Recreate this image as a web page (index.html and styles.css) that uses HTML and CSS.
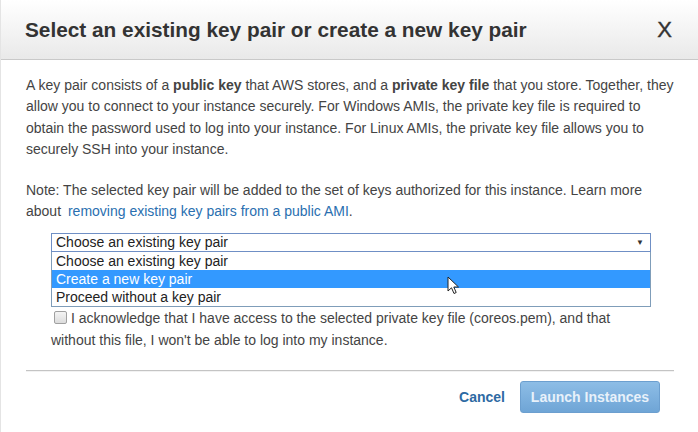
FILE: index.html
```html
<!DOCTYPE html>
<html>
<head>
<meta charset="utf-8">
<link rel="stylesheet" href="styles.css">
</head>
<body>
<div class="modal">
  <div class="header">
    <h1 class="title">Select an existing key pair or create a new key pair</h1>
    <span class="close">X</span>
  </div>
  <div class="body">
    <p class="para">A key pair consists of a <b>public key</b> that AWS stores, and a <b>private key file</b> that you store. Together, they allow you to connect to your instance securely. For Windows AMIs, the private key file is required to obtain the password used to log into your instance. For Linux AMIs, the private key file allows you to securely SSH into your instance.</p>
    <p class="para note">Note: The selected key pair will be added to the set of keys authorized for this instance. Learn more about <a class="link" href="#">removing existing key pairs from a public AMI</a>.</p>
    <div class="selectwrap">
      <div class="select"><span>Choose an existing key pair</span><span class="arrow">▼</span></div>
      <div class="list">
        <div class="opt">Choose an existing key pair</div>
        <div class="opt active">Create a new key pair</div>
        <div class="opt">Proceed without a key pair</div>
      </div>
      <svg class="cursor" width="13" height="20" viewBox="0 0 13 20"><path d="M1 1 L1 15 L4.5 11.8 L7 17.5 L9.2 16.5 L6.8 11 L11.5 11 Z" fill="#fff" stroke="#222" stroke-width="1" stroke-linejoin="round"/></svg>
    </div>
    <div class="ack">
      <span class="box"></span> I acknowledge that I have access to the selected private key file (coreos.pem), and that without this file, I won't be able to log into my instance.
    </div>
    <div class="rule"></div>
    <div class="footer">
      <a class="cancel" href="#">Cancel</a>
      <span class="launch">Launch Instances</span>
    </div>
  </div>
</div>
</body>
</html>
```
FILE: styles.css
```css
html, body {
  margin: 0;
  padding: 0;
  background: #fff;
}
body {
  font-family: "Liberation Sans", Arial, sans-serif;
  color: #444;
  width: 698px;
  height: 432px;
  overflow: hidden;
}
.modal {
  width: 698px;
  height: 432px;
  border-left: 1px solid #e4e4e4;
  box-sizing: border-box;
}
.header {
  height: 60px;
  box-sizing: border-box;
  background: linear-gradient(#ffffff, #e9e9e9);
  border-bottom: 1px solid #c9c9c9;
  display: flex;
  align-items: center;
  justify-content: space-between;
  padding: 0 26px 0 24px;
}
.title {
  margin: 0;
  font-size: 20.8px;
  font-weight: bold;
  color: #333;
}
.close {
  font-size: 22px;
  color: #333;
  font-weight: normal;
  -webkit-text-stroke: 0.4px #333;
}
.body {
  padding: 15px 22px 0 25px;
}
.para {
  margin: 0 0 20px 0;
  font-size: 14px;
  line-height: 21.3px;
}
.note {
  margin-bottom: 10px;
}
.link {
  color: #2a6fb0;
  text-decoration: none;
  margin-left: 3px;
}
.selectwrap {
  position: relative;
  margin-left: 25px;
  width: 600px;
}
.select {
  height: 19px;
  box-sizing: border-box;
  border: 1px solid #6f8fc5;
  display: flex;
  justify-content: space-between;
  align-items: center;
  padding: 0 6px 0 4px;
  font-size: 14px;
  color: #222;
}
.arrow {
  font-size: 8px;
  color: #333;
}
.list {
  border: 1px solid #7f9db9;
  border-top: none;
  font-size: 14px;
  color: #222;
}
.opt {
  height: 18px;
  line-height: 18px;
  padding-left: 4px;
}
.opt.active {
  background: #3399ff;
  color: #fff;
}
.cursor {
  position: absolute;
  left: 396px;
  top: 43px;
}
.ack {
  margin-left: 25px;
  max-width: 575px;
  font-size: 14px;
  line-height: 22px;
  color: #444;
}
.box {
  display: inline-block;
  width: 11px;
  height: 11px;
  border: 1px solid #a0a0a0;
  border-radius: 2px;
  background: linear-gradient(#f4f4f4, #dcdcdc);
  vertical-align: -1px;
  margin-left: 3px;
}
.rule {
  margin-top: 19px;
  margin-right: 2px;
  height: 1px;
  background: #c4c4c4;
  border-bottom: 1px solid #f2f2f2;
}
.footer {
  display: flex;
  justify-content: flex-end;
  align-items: center;
  padding-top: 9px;
  padding-right: 16px;
}
.cancel {
  font-size: 14px;
  font-weight: bold;
  color: #2d6aa3;
  text-decoration: none;
  margin-right: 15px;
}
.launch {
  display: inline-block;
  width: 140px;
  height: 32px;
  line-height: 30px;
  box-sizing: border-box;
  text-align: center;
  background: linear-gradient(#8dbde6, #6fa5d6);
  border: 1px solid #6c9fcf;
  border-radius: 3px;
  color: #e8f1fa;
  font-weight: bold;
  font-size: 14px;
}
```
